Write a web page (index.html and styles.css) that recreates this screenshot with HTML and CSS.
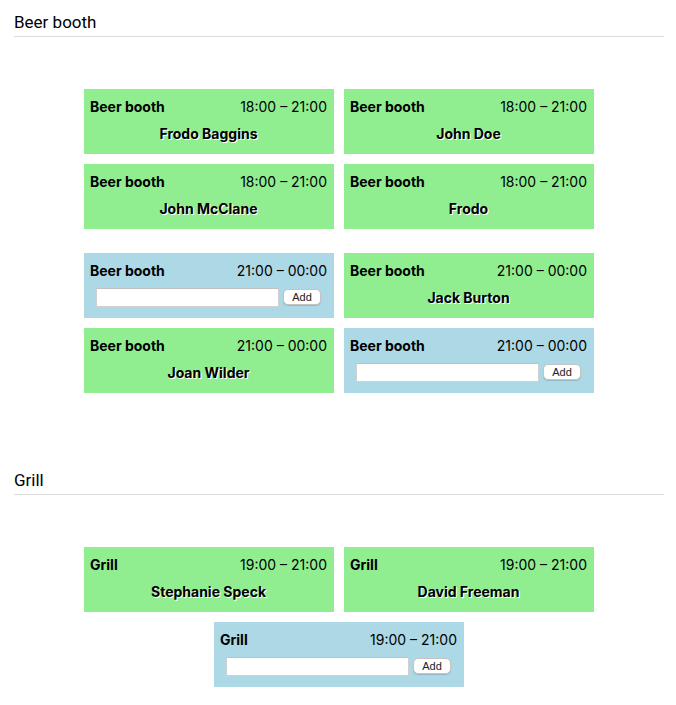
FILE: index.html
```html
<!DOCTYPE html>
<html>
<head>
<meta charset="utf-8">
<link rel="stylesheet" href="styles.css">
</head>
<body>
<div class="page">
  <section class="booth">
    <h2 class="booth-title">Beer booth</h2>
    <div class="groups">
      <div class="slots">
        <div class="slot taken"><div class="slot-head"><span class="slot-name">Beer booth</span><span class="slot-time">18:00 – 21:00</span></div><div class="slot-body"><span class="person">Frodo Baggins</span></div></div>
        <div class="slot taken"><div class="slot-head"><span class="slot-name">Beer booth</span><span class="slot-time">18:00 – 21:00</span></div><div class="slot-body"><span class="person">John Doe</span></div></div>
        <div class="slot taken"><div class="slot-head"><span class="slot-name">Beer booth</span><span class="slot-time">18:00 – 21:00</span></div><div class="slot-body"><span class="person">John McClane</span></div></div>
        <div class="slot taken"><div class="slot-head"><span class="slot-name">Beer booth</span><span class="slot-time">18:00 – 21:00</span></div><div class="slot-body"><span class="person">Frodo</span></div></div>
      </div>
      <div class="slots">
        <div class="slot open"><div class="slot-head"><span class="slot-name">Beer booth</span><span class="slot-time">21:00 – 00:00</span></div><div class="slot-body"><input class="name-input" type="text"><button class="add-btn">Add</button></div></div>
        <div class="slot taken"><div class="slot-head"><span class="slot-name">Beer booth</span><span class="slot-time">21:00 – 00:00</span></div><div class="slot-body"><span class="person">Jack Burton</span></div></div>
        <div class="slot taken"><div class="slot-head"><span class="slot-name">Beer booth</span><span class="slot-time">21:00 – 00:00</span></div><div class="slot-body"><span class="person">Joan Wilder</span></div></div>
        <div class="slot open"><div class="slot-head"><span class="slot-name">Beer booth</span><span class="slot-time">21:00 – 00:00</span></div><div class="slot-body"><input class="name-input" type="text"><button class="add-btn">Add</button></div></div>
      </div>
    </div>
  </section>
  <section class="booth">
    <h2 class="booth-title">Grill</h2>
    <div class="groups">
      <div class="slots">
        <div class="slot taken"><div class="slot-head"><span class="slot-name">Grill</span><span class="slot-time">19:00 – 21:00</span></div><div class="slot-body"><span class="person">Stephanie Speck</span></div></div>
        <div class="slot taken"><div class="slot-head"><span class="slot-name">Grill</span><span class="slot-time">19:00 – 21:00</span></div><div class="slot-body"><span class="person">David Freeman</span></div></div>
        <div class="slot open"><div class="slot-head"><span class="slot-name">Grill</span><span class="slot-time">19:00 – 21:00</span></div><div class="slot-body"><input class="name-input" type="text"><button class="add-btn">Add</button></div></div>
      </div>
    </div>
  </section>
</div>
</body>
</html>
```

FILE: styles.css
```css
html, body {
  margin: 0;
  padding: 0;
  background: #fff;
}
.page {
  padding: 0 12px 0 14px;
  font-family: Inter, "Liberation Sans", sans-serif;
  color: #000;
}
.booth {
  margin-bottom: 60px;
}
.booth-title {
  margin: 0;
  padding: 13px 0 5px;
  font-family: Roboto, "Liberation Sans", sans-serif;
  font-weight: 400;
  font-size: 17px;
  line-height: 18px;
  border-bottom: 1px solid #dcdcdc;
}
.groups {
  margin-top: 47px;
  display: flex;
  flex-direction: column;
  gap: 14px;
}
.slots {
  display: flex;
  flex-wrap: wrap;
  justify-content: center;
}
.slot {
  box-sizing: border-box;
  width: 250px;
  height: 65px;
  margin: 5px;
  padding: 8px 7px 0 6px;
  display: flex;
  flex-direction: column;
  gap: 9px;
}
.taken {
  background: #90ee90;
}
.open {
  background: #add8e6;
}
.slot-head {
  display: flex;
  justify-content: space-between;
  align-items: center;
  height: 18px;
  font-size: 14px;
}
.slot-name {
  font-weight: 700;
}
.slot-time {
  font-weight: 400;
}
.slot-body {
  height: 18px;
  display: flex;
  justify-content: center;
  align-items: center;
  gap: 4px;
}
.person {
  font-size: 14px;
  font-weight: 700;
  text-shadow: 1px 1px 0 #fff;
}
.name-input {
  box-sizing: border-box;
  width: 183px;
  height: 19px;
  margin: 0;
  padding: 0 3px;
  border: 1px solid #d0d0d0;
  border-top-color: #c0c0c0;
  background: #fff;
  outline: none;
}
.add-btn {
  box-sizing: border-box;
  width: 38px;
  height: 16px;
  margin: 0;
  padding: 0;
  font-family: "Liberation Sans", sans-serif;
  font-size: 11px;
  line-height: 14px;
  color: #222;
  background: #fff;
  border: 1px solid #c4c4c4;
  border-radius: 5px;
  box-shadow: 0 1px 1px rgba(0,0,0,0.15);
}
```
